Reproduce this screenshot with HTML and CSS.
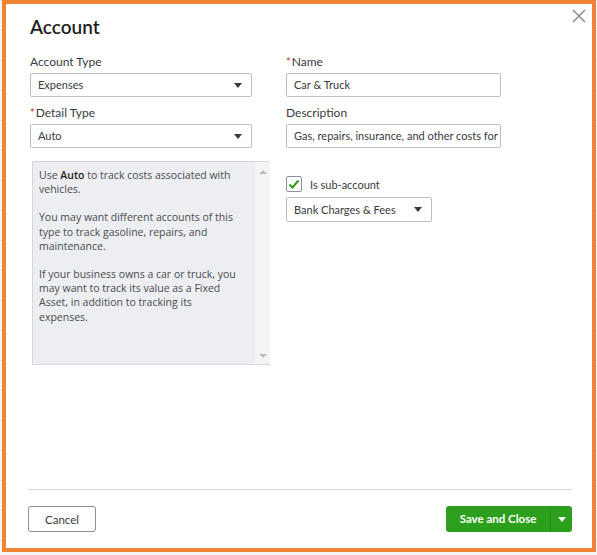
FILE: index.html
```html
<!DOCTYPE html>
<html lang="en">
<head>
    <meta charset="UTF-8">
    <meta name="viewport" content="width=device-width, initial-scale=1.0">
    <title>Account</title>
    <link rel="stylesheet" href="styles.css">
</head>
<body>
    <div class="modal">
        <span class="close-button">
            <svg width="16" height="16" viewBox="0 0 16 16"><path d="M2 2 L14 14 M14 2 L2 14" stroke="#8d9096" stroke-width="1.6" fill="none"/></svg>
        </span>
        <div class="modal-header">
            <h1>Account</h1>
        </div>
        <div class="modal-body">
            <div class="col left">
                <div class="field">
                    <label>Account Type</label>
                    <div class="select">Expenses<span class="caret"></span></div>
                </div>
                <div class="field">
                    <label><span class="req">*</span>Detail Type</label>
                    <div class="select">Auto<span class="caret"></span></div>
                </div>
                <div class="help-box">
                    <div class="help-text">
                        <p>Use <b>Auto</b> to track costs associated with vehicles.</p>
                        <p>You may want different accounts of this type to track gasoline, repairs, and maintenance.</p>
                        <p>If your business owns a car or truck, you may want to track its value as a Fixed Asset, in addition to tracking its expenses.</p>
                    </div>
                    <div class="scrollbar">
                        <span class="arrow up"></span>
                        <span class="arrow down"></span>
                    </div>
                </div>
            </div>
            <div class="col right">
                <div class="field">
                    <label><span class="req">*</span>Name</label>
                    <div class="input">Car &amp; Truck</div>
                </div>
                <div class="field">
                    <label>Description</label>
                    <div class="input">Gas, repairs, insurance, and other costs for vehicles</div>
                </div>
                <div class="sub-account">
                    <span class="checkbox">
                        <svg width="12" height="12" viewBox="0 0 12 12"><path d="M1.5 6.5 L4.5 9.5 L10.5 2.5" stroke="#2ca01c" stroke-width="2" fill="none"/></svg>
                    </span>
                    <span>Is sub-account</span>
                </div>
                <div class="select small">Bank Charges &amp; Fees<span class="caret"></span></div>
            </div>
        </div>
        <div class="modal-footer">
            <button class="btn-cancel">Cancel</button>
            <div class="btn-save">
                <span class="save-label">Save and Close</span>
                <span class="save-caret"></span>
            </div>
        </div>
    </div>
</body>
</html>
```

FILE: styles.css
```css
/* Page behind the dialog */
body {
    margin: 0;
    font-family: Lato, "Noto Sans", sans-serif;
    color: #393a3d;
    background-color: #f4f5f7;
    background-image: linear-gradient(#dfe1e4 1px, transparent 1px);
    background-size: 100% 30px;
}

/* Dialog */
.modal {
    position: relative;
    margin-left: 2px;
    width: 594px;
    height: 552px;
    box-sizing: border-box;
    border: 4px solid #ef8434;
    background-color: #fff;
    display: flex;
    flex-direction: column;
}

.close-button {
    position: absolute;
    top: 4px;
    right: 5px;
    cursor: pointer;
}

.modal-header {
    padding: 10px 24px 0;
}

.modal-header h1 {
    margin: 0;
    font-size: 19px;
    line-height: 26px;
    font-weight: 600;
    color: #1f1f21;
}

.modal-body {
    display: flex;
    gap: 34px;
    padding: 14px 24px 0;
}

.col.left {
    width: 222px;
}

.col.right {
    width: 215px;
}

.field {
    margin-bottom: 8px;
}

.field label {
    display: block;
    font-size: 12px;
    line-height: 16px;
    margin-bottom: 3px;
    color: #393a3d;
}

.req {
    color: #d52b1e;
    font-size: 11px;
    margin-right: 1px;
}

/* Inputs and selects */
.input,
.select {
    position: relative;
    height: 24px;
    box-sizing: border-box;
    border: 1px solid #babec5;
    border-radius: 2px;
    padding: 0 7px;
    font-size: 11px;
    line-height: 22px;
    white-space: nowrap;
    overflow: hidden;
    color: #393a3d;
}

.select .caret {
    position: absolute;
    right: 9px;
    top: 9px;
    width: 0;
    height: 0;
    border-left: 4px solid transparent;
    border-right: 4px solid transparent;
    border-top: 5px solid #393a3d;
}

.select.small {
    width: 146px;
    height: 25px;
    line-height: 23px;
}

/* Detail type help */
.help-box {
    display: flex;
    margin: 13px 0 0 2px;
    width: 238px;
    height: 204px;
    box-sizing: border-box;
    border: 1px solid #d4d7dc;
    border-right: none;
    background-color: #eceef1;
}

.help-text {
    flex: 1 1 0;
    min-width: 0;
    padding: 6px 15px 0 6px;
    font-family: "Open Sans", Lato, sans-serif;
    font-size: 10.5px;
    line-height: 14.2px;
    color: #4a4b4f;
}

.help-text p {
    margin: 0 0 14px;
}

.help-text b {
    font-weight: 600;
    color: #1f1f21;
}

.scrollbar {
    flex-shrink: 0;
    width: 15px;
    background-color: #f3f4f6;
    display: flex;
    flex-direction: column;
    justify-content: space-between;
    align-items: center;
    padding: 8px 0 6px;
}

.arrow {
    width: 0;
    height: 0;
    border-left: 4px solid transparent;
    border-right: 4px solid transparent;
}

.arrow.up {
    border-bottom: 4px solid #b9bcc1;
}

.arrow.down {
    border-top: 4px solid #b9bcc1;
}

/* Sub-account */
.sub-account {
    display: flex;
    align-items: center;
    gap: 8px;
    margin-top: 28px;
    margin-bottom: 5px;
    font-size: 11px;
}

.checkbox {
    width: 16px;
    height: 16px;
    box-sizing: border-box;
    border: 1px solid #8d9096;
    border-radius: 2px;
    display: flex;
    align-items: center;
    justify-content: center;
}

/* Footer */
.modal-footer {
    margin: auto 20px 0 22px;
    border-top: 1px solid #d4d7dc;
    padding: 16px 0 16px;
    display: flex;
    justify-content: space-between;
}

.btn-cancel {
    width: 68px;
    height: 26px;
    border: 1px solid #8d9096;
    border-radius: 3px;
    background-color: #fff;
    font-family: inherit;
    font-size: 11.5px;
    color: #393a3d;
    padding: 0;
}

.btn-save {
    display: flex;
    height: 26px;
    border-radius: 3px;
    background-color: #2ca01c;
    color: #fff;
    font-size: 11.5px;
    font-weight: 700;
    line-height: 26px;
}

.save-label {
    width: 104px;
    text-align: center;
    border-right: 1px solid #24881a;
}

.save-caret {
    width: 21px;
    display: flex;
    align-items: center;
    justify-content: center;
}

.save-caret::after {
    content: "";
    border-left: 4px solid transparent;
    border-right: 4px solid transparent;
    border-top: 5px solid #fff;
}
```
